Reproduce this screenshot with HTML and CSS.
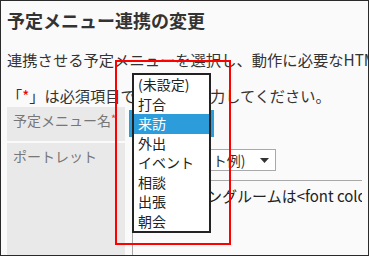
FILE: index.html
```html
<!DOCTYPE html>
<html lang="ja">
<head>
    <meta charset="UTF-8">
    <meta name="viewport" content="width=device-width, initial-scale=1.0">
    <title>予定メニュー連携の変更</title>
    <link rel="stylesheet" href="styles.css">
</head>
<body>
    <div class="screen">
        <h1 class="title">予定メニュー連携の変更</h1>
        <p class="lead">連携させる予定メニューを選択し、動作に必要なHTMLを入力してください。</p>
        <p class="note">「<span class="req">*</span>」は必須項目です。必ず入力してください。</p>

        <div class="form">
            <div class="label">予定メニュー名<span class="mark">*</span></div>
            <div class="value">
                <div class="select-active">来訪</div>
            </div>

            <div class="label">ポートレット</div>
            <div class="value value-box">
                <div class="select-row">
                    <div class="select">
                        <span>(ポートレット例)</span>
                        <svg class="arrow" width="9" height="5" viewBox="0 0 9 5"><polygon points="0,0 9,0 4.5,5" fill="#333"/></svg>
                    </div>
                </div>
                <div class="html-row">ミーティングルームは&lt;font color="#ff0000"&gt;</div>
            </div>
        </div>

        <!-- liste déroulante ouverte -->
        <ul class="dropdown">
            <li>(未設定)</li>
            <li>打合</li>
            <li class="selected">来訪</li>
            <li>外出</li>
            <li>イベント</li>
            <li>相談</li>
            <li>出張</li>
            <li>朝会</li>
        </ul>

        <!-- cadre rouge d'annotation -->
        <div class="callout"></div>
    </div>
</body>
</html>
```

FILE: styles.css
```css
body {
    margin: 0;
    width: 369px;
    height: 256px;
    box-sizing: border-box;
    border: 1px solid #2a2a2a;
    background-color: #fafafa;
    overflow: hidden;
    font-family: "Noto Sans CJK JP", "Noto Sans", sans-serif;
    color: #333;
}
.screen {
    position: relative;
    height: 100%;
    padding: 0 6px;
    white-space: nowrap;
    overflow: hidden;
}
.title {
    margin: 7px 0 0;
    font-size: 18px;
    line-height: 24px;
    font-weight: bold;
    color: #333;
}
.lead {
    margin: 17px 0 0;
    font-size: 15.3px;
    line-height: 20px;
}
.note {
    margin: 16px 0 0;
    font-size: 15.2px;
    line-height: 20px;
}
.req {
    color: #e60000;
}
.form {
    display: grid;
    grid-template-columns: 118px 1fr;
    grid-template-rows: 34px 1fr;
    column-gap: 4px;
    row-gap: 2px;
    margin-top: 2px;
    height: 160px;
}
.label {
    background-color: #e9e9e9;
    color: #777;
    font-size: 14px;
    line-height: 20px;
    padding: 3px 6px 0;
}
.mark {
    color: #e53935;
    font-size: 11px;
    vertical-align: top;
    position: relative;
    top: -2px;
}
.value {
    padding-top: 3px;
}
.select-active {
    width: 85px;
    height: 27px;
    background-color: #2d9cdb;
    color: #fff;
    font-size: 14px;
    line-height: 27px;
    padding-left: 6px;
    box-sizing: border-box;
}
.value-box {
    padding-top: 0;
    margin-left: 3px;
    border-left: 1px solid #a8a8a8;
    overflow: hidden;
}
.select-row {
    padding: 6px 0 9px 2px;
    border-bottom: 1px solid #a8a8a8;
}
.select {
    display: flex;
    align-items: center;
    justify-content: space-between;
    width: 141px;
    height: 22px;
    box-sizing: border-box;
    border: 1px solid #a9a9a9;
    background-color: #fff;
    padding: 0 6px 0 2px;
    font-size: 14px;
    color: #333;
}
.html-row {
    padding: 5px 0 0 15px;
    font-size: 15px;
    line-height: 20px;
    color: #222;
}
.dropdown {
    position: absolute;
    left: 131px;
    top: 72px;
    width: 79px;
    height: 160px;
    box-sizing: border-box;
    margin: 0;
    padding: 0;
    list-style: none;
    border: 2px solid #222;
    background-color: #fff;
}
.dropdown li {
    height: 19.5px;
    line-height: 19.5px;
    padding-left: 4px;
    font-size: 14px;
    color: #222;
}
.dropdown li.selected {
    background-color: #2d9cdb;
    color: #fff;
}
.callout {
    position: absolute;
    left: 114px;
    top: 59px;
    width: 116px;
    height: 185px;
    box-sizing: border-box;
    border: 2px solid #ff0000;
}
```
